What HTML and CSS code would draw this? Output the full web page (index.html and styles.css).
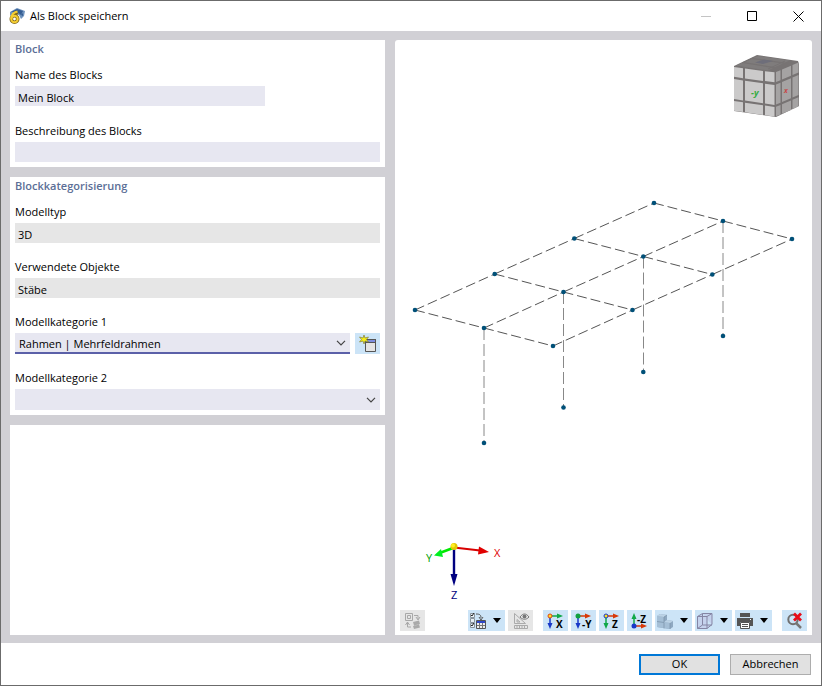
FILE: index.html
```html
<!DOCTYPE html>
<html lang="de">
<head>
<meta charset="utf-8">
<title>Als Block speichern</title>
<link rel="stylesheet" href="styles.css">
</head>
<body>
<div class="dialog">
  <header class="titlebar">
    <svg class="app-icon" viewBox="0 0 16 16" aria-hidden="true">
      <path d="M1 4 8 0l8 3-1 5-3 3-2-4-6-1-3 2z" fill="#6f93bd"/>
      <path d="M2 4 8 1l6 2-2 4-4-3zM12 7l2-2v3z" fill="#345c92"/>
      <path d="M8 4 5 7" fill="none" stroke="#80681a" stroke-width="4"/>
      <circle cx="5.500" cy="11" r="3.200" fill="none" stroke="#80681a" stroke-width="3.600"/>
      <path d="M8.500 3.500C5 4 2.500 7 2.300 11" fill="none" stroke="#f5ce32" stroke-width="2"/>
      <circle cx="5.500" cy="11" r="3.200" fill="none" stroke="#f5ce32" stroke-width="2"/>
    </svg>
    <h1 class="title">Als Block speichern</h1>
    <div class="window-controls">
      <button class="win-btn" type="button" aria-label="Minimieren" disabled><svg viewBox="0 0 11 11"><path d="M0 5.500h10" stroke="#c4c4c4"/></svg></button>
      <button class="win-btn" type="button" aria-label="Maximieren"><svg viewBox="0 0 11 11"><path d="M.5.5h9v9h-9z" fill="none" stroke="#000"/></svg></button>
      <button class="win-btn" type="button" aria-label="Schließen"><svg viewBox="0 0 11 11"><path d="m.5.5 10 10m0-10-10 10" fill="none" stroke="#000"/></svg></button>
    </div>
  </header>

  <main class="content">
    <form class="sidebar">
      <section class="panel panel-block">
        <h2 class="heading">Block</h2>
        <div class="field"><label for="name">Name des Blocks</label><input class="control short" id="name" type="text" value="Mein Block"></div>
        <div class="field"><label for="desc">Beschreibung des Blocks</label><input class="control" id="desc" type="text"></div>
      </section>
      <section class="panel panel-category">
        <h2 class="heading">Blockkategorisierung</h2>
        <div class="field"><label for="type">Modelltyp</label><input class="control" id="type" type="text" value="3D" readonly></div>
        <div class="field"><label for="objects">Verwendete Objekte</label><input class="control" id="objects" type="text" value="Stäbe" readonly></div>
        <div class="field">
          <label for="cat1">Modellkategorie 1</label>
          <div class="row">
            <select class="control active" id="cat1"><option>Rahmen | Mehrfeldrahmen</option></select>
            <button class="tool" type="button" aria-label="Neue Kategorie">
              <svg class="icon" viewBox="0 0 18 18"><path d="M6.500 7.500h10v9h-10z" fill="#e4e4e4" stroke="#555"/><path d="M7 5.500h9v1H7z" fill="#3038c8"/><path d="M6 4.500h11M6 7.500h11M6.500 5v3M16.500 5v3" stroke="#555"/><path d="M5 0 6 3 9.500 2 7.500 4.500 9.500 7 6 6 5 9 4 6 .5 7l2-2.500L.5 2 4 3z" fill="#f6ee18" stroke="#85823a" stroke-width=".7"/></svg>
            </button>
          </div>
        </div>
        <div class="field"><label for="cat2">Modellkategorie 2</label><select class="control" id="cat2"><option></option></select></div>
      </section>
      <section class="panel panel-empty"></section>
    </form>

    <section class="panel preview">
      <svg class="scene" viewBox="395 40 417 566" role="img" aria-label="Modellvorschau">
        <g class="members">
          <path d="M415 310 494.700 274"/><path d="M494.700 274 574.300 238.500"/><path d="M574.300 238.500 654 203"/>
          <path d="M484 328 563.500 292"/><path d="M563.500 292 643.300 256.500"/><path d="M643.300 256.500 723 221"/>
          <path d="M553 346 632.500 310"/><path d="M632.500 310 712.300 274.500"/><path d="M712.300 274.500 792 239"/>
          <path d="M415 310 484 328"/><path d="M484 328 553 346"/>
          <path d="M494.700 274 563.500 292"/><path d="M563.500 292 632.500 310"/>
          <path d="M574.300 238.500 643.300 256.500"/><path d="M643.300 256.500 712.300 274.500"/>
          <path d="M654 203 723 221"/><path d="M723 221 792 239"/>
        </g>
        <g class="members columns">
          <path d="M484 328V443"/><path d="M563.500 292V407"/><path d="M643.500 256.500V372"/><path d="M723 221V336"/>
        </g>
        <g fill="#005078">
          <circle cx="415" cy="310" r="2.300"/><circle cx="494.700" cy="274" r="2.300"/><circle cx="574.300" cy="238.500" r="2.300"/><circle cx="654" cy="203" r="2.300"/>
          <circle cx="484" cy="328" r="2.300"/><circle cx="563.500" cy="292" r="2.300"/><circle cx="643.300" cy="256.500" r="2.300"/><circle cx="723" cy="221" r="2.300"/>
          <circle cx="553" cy="346" r="2.300"/><circle cx="632.500" cy="310" r="2.300"/><circle cx="712.300" cy="274.500" r="2.300"/><circle cx="792" cy="239" r="2.300"/>
          <circle cx="484" cy="443" r="2.300"/><circle cx="563.500" cy="407.500" r="2.300"/><circle cx="643.300" cy="372" r="2.300"/><circle cx="723" cy="336" r="2.300"/>
        </g>
        <g class="cube">
          <path d="M734 66 757 55 798 61 799 64V106L776 117 734 111z" fill="#777373"/>
          <path d="m736 65.500 6-2.500 31 5-5 2.500zM744 62l7-3 32 4.500-8 3.500zM753 58l5-2 32 4.500-5 2z" fill="#7f7c7c"/>
          <path d="m755 62.500 9-3 9 1.500-10 3z" fill="#6e6e7a"/>
          <path d="m742 63 12-5.500M768 69l17-8" stroke="#777373"/>
          <path d="m734 67 9 1.300v10l-9-1.500zM745 68.500l18 2.500v10l-18-2.500zM765 71.300l9.500 1v10l-9.500-1.300zM734 79l9 1.500v20l-9-1.500zM745 80.800l18 2.500v20l-18-2.800zM765 83.700l9.500 1.300v20l-9.500-1.500zM734 101l9 1.300v9.700l-9-1.300zM745 102.700l18 2.500v9.800l-18-2.700zM765 105.600l9.500 1.300v9.500l-9.500-1.200z" fill="#cbcaca"/>
          <path d="m776 72 4.500-1.800v10L776 82zM782 69.500l9-3.700v10l-9 3.800zM792.500 65l6-2.500v10l-6 2.500zM776 84.500l4.500-1.800v20l-4.500 1.800zM782 82l9-3.700v20l-9 3.800zM792.500 77.500l6-2.500v20l-6 2.500zM776 106.800l4.500-1.800v9.500l-4.500 1.800zM782 104.300l9-3.700v9.500l-9 3.700zM792.500 99.800l6-2.500v9l-6 3z" fill="#a5a3a3"/>
          <text class="cube-label" x="751" y="96">-y</text>
          <text class="cube-label side" x="784" y="93">x</text>
        </g>
        <g class="axes">
          <path d="M454 548v27" stroke="#000080" stroke-width="2.400"/><path d="m450.500 574 3.500 12 3.500-12z" fill="#000080"/>
          <path d="m454 547.500 26 3" stroke="#d80000" stroke-width="2.200"/><path d="m479 546.500 10 5.500-11 2.500z" fill="#e00000"/>
          <path d="m453 548-12 4.500" stroke="#00e800" stroke-width="2.600"/><path d="m441 549-7 6.500 9 1.500z" fill="#00f020"/>
          <circle cx="454" cy="546.500" r="3.500" fill="#e2c800"/><circle cx="453" cy="545.500" r="2" fill="#ffef20"/>
          <text x="494" y="557" fill="#e00000">X</text><text x="426" y="562" fill="#00a000">Y</text><text x="451" y="599" fill="#000080">Z</text>
        </g>
      </svg>

      <div class="toolbar">
        <button class="tool off" type="button" aria-label="Ansicht übertragen" disabled><svg class="icon" viewBox="0 0 18 18"><g fill="none" stroke="#a8a8a8"><path d="M1.500 1.500h7v7h-7zM3.500 3.500h3v3h-3zM10 3.500h4V7m-2-2 2 3 2-3M3.500 10v5H7M1.500 13l2-3 2 3"/></g><path d="m9 10 6-1.500 1 3.500-6 1.500zM9 14l6-1.500 1 3-6 1.500z" fill="#aaa"/></svg></button>
        <button class="tool split after-first" type="button" aria-label="Anzeigeoptionen"><svg class="icon" viewBox="0 0 18 18"><g fill="#e8f0f6" stroke="#8a949c"><path d="M1.500 1.500h4v4h-4zM1.500 6.500h4v4h-4zM1.500 11.500h4v4h-4z"/></g><path d="m2 3 1 1 2-3M2 13l1 1 2-3" stroke="#222" fill="none"/><path d="M7 2c4 0 5 1 5 4m-2-1 2 3 2-3" fill="none" stroke="#555"/><path d="M7.500 8.500h9v8h-9z" fill="#eee" stroke="#555"/><path d="M8 9h8v2H8z" fill="#3048c8"/><path d="M8 13.500h8M10.500 11v5M13.500 11v5" stroke="#777"/></svg><span class="arrow"></span></button>
        <button class="tool off" type="button" aria-label="Maße anzeigen" disabled><svg class="icon" viewBox="0 0 18 18"><g fill="none" stroke="#aaa"><path d="M2.500 1.500v10h11zM5 7.500V10h3zM2.500 13.500h13v3h-13zM5 14v2M7.500 14v2M10 14v2M12.500 14v2"/></g><path d="M8 5c3-4 6-4 9 0-3 3-6 3-9 0" fill="#eee" stroke="#777"/><circle cx="12.500" cy="4.500" r="2" fill="#777"/></svg></button>
        <button class="tool view-first" type="button" aria-label="Ansicht in X"><svg class="icon" viewBox="0 0 18 18"><path d="M3 4h7" stroke="#10a848" stroke-width="1.500"/><path d="m10 1.500 6 2.500-6 2.500z" fill="#10a848"/><path d="M3 4v8" stroke="#1838c8" stroke-width="1.500"/><path d="m.5 11 2.500 6 2.500-6z" fill="#1838c8"/><circle cx="3" cy="4" r="2" fill="#ffe020" stroke="#e04418"/><text class="axis" x="9" y="16">X</text></svg></button>
        <button class="tool" type="button" aria-label="Ansicht gegen Y"><svg class="icon" viewBox="0 0 18 18"><path d="M3 4h7" stroke="#d83808" stroke-width="1.500"/><path d="m10 1.500 6 2.500-6 2.500z" fill="#d83808"/><path d="M3 4v8" stroke="#1838c8" stroke-width="1.500"/><path d="m.5 11 2.500 6 2.500-6z" fill="#1838c8"/><circle cx="3" cy="4" r="2.500" fill="#10a040"/><text class="axis" x="7" y="16">-Y</text></svg></button>
        <button class="tool" type="button" aria-label="Ansicht in Z"><svg class="icon" viewBox="0 0 18 18"><path d="M3 4h7" stroke="#d83808" stroke-width="1.500"/><path d="m10 1.500 6 2.500-6 2.500z" fill="#d83808"/><path d="M3 4v8" stroke="#10a848" stroke-width="1.500"/><path d="m.5 11 2.500 6 2.500-6z" fill="#10a848"/><circle cx="3" cy="4" r="2" fill="#ffe020" stroke="#1838c8"/><text class="axis" x="9" y="16">Z</text></svg></button>
        <button class="tool" type="button" aria-label="Ansicht gegen Z"><svg class="icon" viewBox="0 0 18 18"><path d="M3 14V6" stroke="#10a848" stroke-width="1.500"/><path d="m.5 7 2.500-6 2.500 6z" fill="#10a848"/><path d="M3 14h7" stroke="#d83808" stroke-width="1.500"/><path d="m10 11.500 6 2.500-6 2.500z" fill="#d83808"/><circle cx="3" cy="14" r="2.500" fill="#1838c8"/><text class="axis" x="6" y="11">-Z</text></svg></button>
        <button class="tool split" type="button" aria-label="Darstellung"><svg class="icon" viewBox="0 0 18 18"><path d="m1 4 3-2 7 1v5l6 1v6l-3 2-13-2z" fill="#8fa9c2"/><path d="m1 4 7 1v5l6 1v6L1 15z" fill="#a5bfd6"/><path d="m1 4 3-2 7 1-3 2zM8 10l3-2 6 1-3 2z" fill="#bcd3e6"/><path d="M1 9.500 8 10.500v6M8 5l3-2M8 5v5M14 11v6" fill="none" stroke="#7890a8" stroke-width=".7"/></svg><span class="arrow"></span></button>
        <button class="tool split" type="button" aria-label="Transparenz"><svg class="icon" viewBox="0 0 18 18"><g fill="#bdc0e4" fill-opacity=".5" stroke="#8585a4"><path d="m1.500 4.500 5-3h9.500v11l-5 4H1.500zM1.500 4.500H11V16.500M11 4.500l5-3M6.500 1.500V13H16M6.500 13l-5 3.500"/></g></svg><span class="arrow"></span></button>
        <button class="tool split" type="button" aria-label="Drucken"><svg class="icon" viewBox="0 0 18 18"><path d="M4 1h10v4H4zM1 6h16v8h-3v-4H4v4H1z" fill="#555"/><path d="M4.500 10.500h9v6h-9z" fill="#fff" stroke="#555"/><path d="M6 12.500h6M6 14.500h6" stroke="#555"/><path d="M14 7h1v1h-1z" fill="#fff"/></svg><span class="arrow"></span></button>
        <button class="tool last" type="button" aria-label="Zoom zurücksetzen"><svg class="icon" viewBox="0 0 18 18"><circle cx="7" cy="7.500" r="4.700" fill="none" stroke="#707070" stroke-width="2"/><path d="m10 11 5 5" stroke="#777" stroke-width="2.500"/><path d="m8 1.500 7 7m0-7-7 7" stroke="#e80c18" stroke-width="2.800"/></svg></button>
      </div>
    </section>
  </main>

  <footer class="footer">
    <button class="btn primary" type="button">OK</button>
    <button class="btn" type="button">Abbrechen</button>
  </footer>
</div>
</body>
</html>
```
FILE: styles.css
```css
* { box-sizing: border-box; }
body { margin: 0; font: 11px/16px "Open Sans", "Noto Sans", sans-serif; color: #000; }
button, input, select { font: inherit; color: inherit; margin: 0; border: 0; border-radius: 0; }
h1, h2 { margin: 0; font: inherit; }

.dialog { display: flex; flex-direction: column; min-height: 100vh; border: 1px solid #6b6b6b; background: #fff; }

.titlebar { display: flex; align-items: center; height: 30px; padding-left: 8px; }
.app-icon { width: 16px; height: 16px; margin-right: 5px; }
.title { flex: 1; }
.window-controls { display: flex; }
.win-btn { display: grid; place-items: center; width: 46px; height: 28px; padding: 0; background: none; }
.win-btn svg { width: 11px; height: 11px; }

.content { flex: 1; display: flex; gap: 10px; padding: 9px 9px 8px; background: #d1d0d5; }
.sidebar { flex: 375 1 0; display: flex; flex-direction: column; gap: 10px; min-width: 0; }
.panel { background: #fff; }
.panel-block, .panel-category { display: flex; flex-direction: column; padding: 1px 5px 5px; }
.panel-block { gap: 17px; }
.panel-category { gap: 16px; }
.panel-empty { flex: 1; }
.heading { font-weight: 600; color: #5b6e96; margin-bottom: -7px; }
.panel-category .heading { margin-bottom: -6px; }

.field { display: flex; flex-direction: column; gap: 3px; }
.control { width: 100%; height: 20px; padding: 2px 3px 0; background: #e7e7f1; outline: 0; }
.short { width: 250px; }
.control:read-only:not(select) { background: #e6e6e6; }
select.control {
  height: 21px; padding: 0 4px; appearance: none;
  background: #e7e7f1 url("data:image/svg+xml,%3Csvg xmlns='http://www.w3.org/2000/svg' width='10' height='6'%3E%3Cpath d='M1 .8l4 4 4-4' fill='none' stroke='%23444' stroke-width='1.2'/%3E%3C/svg%3E") no-repeat right 4px center;
}
select.control.active { padding-top: 2px; border-bottom: 2px solid #5b60a8; }
.row { display: flex; gap: 5px; }
.row .control { flex: 1; min-width: 0; }

.preview { flex: 417 1 0; display: flex; flex-direction: column; min-width: 0; border-radius: 3px 3px 0 0; }
.scene { flex: 1; display: block; width: 100%; min-height: 0; }
.members { fill: none; stroke: #555; stroke-width: 1; stroke-dasharray: 10 4; }
.columns { stroke: #888; stroke-dasharray: 12 4; }
.axes text { font-size: 11px; }
.cube-label { font-size: 9px; font-weight: 700; font-style: italic; fill: #35ac42; }
.cube-label.side { font-size: 7px; fill: #c84848; }

.toolbar { display: flex; gap: 3px; padding: 4px 5px; }
.tool { flex: none; display: flex; align-items: center; justify-content: center; width: 25px; height: 21px; padding: 0; background: #cce4f7; }
.tool.off { background: #e6e6e6; }
.tool.split { width: 37px; justify-content: flex-start; gap: 6px; padding-left: 1px; }
.icon { width: 18px; height: 18px; flex: none; overflow: visible; }
.arrow { border: 4px solid transparent; border-top-color: #000; border-top-width: 5px; border-bottom: 0; }
.axis { font-size: 10px; font-weight: 700; }
.after-first { margin-left: 40px; }
.view-first { margin-left: 7px; }
.last { margin-left: auto; }

.footer { display: flex; justify-content: flex-end; align-items: center; gap: 10px; height: 42px; padding: 0 10px; }
.btn { width: 81px; height: 21px; padding: 0; background: #e1e1e1; border: 1px solid #adadad; }
.btn.primary { border: 2px solid #0078d7; }
```
